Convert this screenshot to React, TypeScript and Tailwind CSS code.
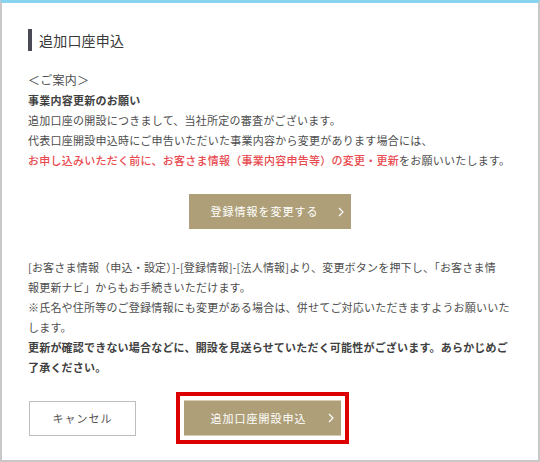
import React from "react";

const font = { fontFamily: '"Noto Sans CJK JP", "Noto Sans", sans-serif' };

function Chevron() {
    return (
        <svg className="absolute right-[7px] top-1/2 -translate-y-1/2" width="6" height="10" viewBox="0 0 6 10" fill="none">
            <path d="M1 1l4 4-4 4" stroke="#ffffff" strokeWidth="1.2" />
        </svg>
    );
}

export default function App() {
    return (
        <div style={font} className="h-[462px] w-[540px] bg-white">
            <div className="flex h-full flex-col border-x-2 border-b-2 border-t-[3px] border-x-[#c8c8c8] border-b-[#c8c8c8] border-t-[#86d4ef] pl-[26px] pt-[26px]">
                <div className="flex h-[22px] items-center">
                    <div className="h-[22px] w-[4px] bg-[#4a4a56]" />
                    <h1 className="ml-[7px] text-[14px] tracking-[0.2px] text-[#3a3a3a]">追加口座申込</h1>
                </div>

                <div className="mt-[19px] w-[500px] text-[11px] leading-[20px] tracking-[0.25px] text-[#4d4d4d]">
                    <div className="text-[12px]">＜ご案内＞</div>
                    <div className="font-bold text-[#404040]">事業内容更新のお願い</div>
                    <div>追加口座の開設につきまして、当社所定の審査がございます。</div>
                    <div>代表口座開設申込時にご申告いただいた事業内容から変更があります場合には、</div>
                    <div>
                        <span className="font-medium text-[#e84a50]">お申し込みいただく前に、お客さま情報（事業内容申告等）の変更・更新</span>
                        をお願いいたします。
                    </div>
                </div>

                <div className="mt-[24px] flex w-[484px] justify-center">
                    <button className="relative ml-[-1px] h-[35px] w-[162px] bg-[#ae9f78] pr-[10px] text-[11px] tracking-[1px] text-white">
                        登録情報を変更する
                        <Chevron />
                    </button>
                </div>

                <div className="mt-[28px] w-[500px] text-[11px] leading-[20px] tracking-[0.2px] text-[#4d4d4d]">
                    <div>
                        [お客さま情報（申込・設定）]-[登録情報]-[法人情報]より、変更ボタンを押下し、「お客さま情
                        <br />
                        報更新ナビ」からもお手続きいただけます。
                    </div>
                    <div>
                        ※氏名や住所等のご登録情報にも変更がある場合は、併せてご対応いただきますようお願いいた
                        <br />
                        します。
                    </div>
                    <div className="font-bold text-[#404040]">
                        更新が確認できない場合などに、開設を見送らせていただく可能性がございます。あらかじめご
                        <br />
                        了承ください。
                    </div>
                </div>

                <div className="mt-[15px] flex items-center">
                    <button className="ml-[1px] h-[35px] w-[107px] border border-[#bdbdbd] bg-white text-[11px] tracking-[1px] text-[#555]">
                        キャンセル
                    </button>
                    <div className="ml-[40px] border-4 border-[#dd0000] p-[4px]">
                        <button className="relative h-[36px] w-[157px] border-y border-[#d6cdb3] bg-[#ae9f78] pr-[8px] text-[11px] tracking-[1px] text-white">
                            追加口座開設申込
                            <Chevron />
                        </button>
                    </div>
                </div>
            </div>
        </div>
    );
}
